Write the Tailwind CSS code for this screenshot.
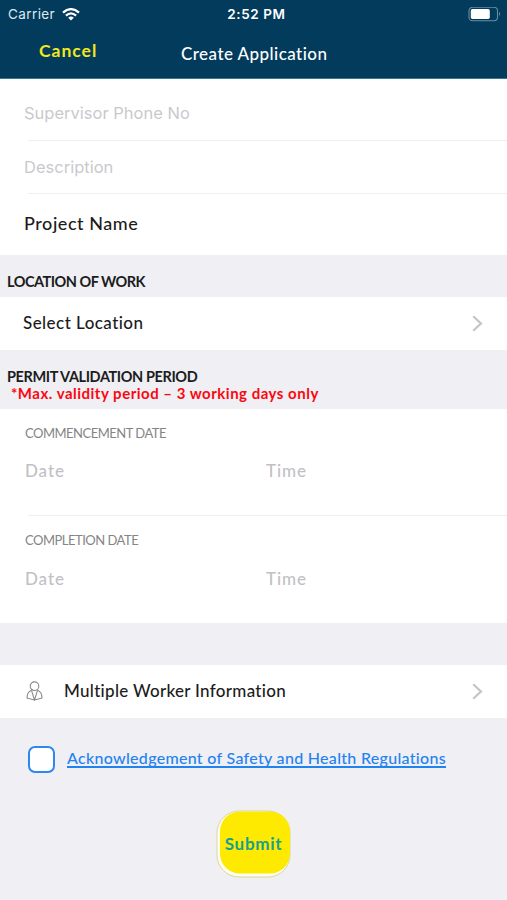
<!DOCTYPE html>
<html lang="en">
<head>
<meta charset="utf-8">
<title>Create Application</title>
<script src="https://cdn.jsdelivr.net/npm/@tailwindcss/browser@4"></script>
</head>
<body class="w-[507px] h-[900px] overflow-hidden bg-[#efeff4] font-[Lato,sans-serif] text-[#1c1c1c] whitespace-nowrap flex flex-col">
<header class="h-[79px] bg-[#023b5c] border-b border-[#3d7590] text-white shrink-0">
  <div class="h-7 pl-[8px] pr-[6px] grid grid-cols-3 items-center font-[Inter,sans-serif] text-[13.5px]">
    <div class="flex items-center gap-[7px] text-[#dfe8ee]"><span class="tracking-[0.4px]">Carrier</span>
      <svg class="w-[18px] h-[13px]" viewBox="0 0 18 13" fill="none" stroke="#fff" stroke-width="2.3"><path d="M1 4.600Q9-2.300 17 4.600M3.900 7.600Q9 3.200 14.100 7.600"/><path d="M9 12.400 6.200 9.700Q9 7.500 11.800 9.700Z" fill="#fff" stroke="none"/></svg>
    </div>
    <span class="text-center font-semibold tracking-[0.6px] pl-1">2:52 PM</span>
    <svg class="justify-self-end w-[33px] h-[15px]" viewBox="0 0 33 15" fill="none"><rect x="1" y=".3" width="28.5" height="13.4" rx="3.5" stroke="#6c8da1" stroke-width="1.1"/><rect x="2.8" y="2.1" width="19" height="9.8" rx="1.6" fill="#fff"/><path d="M31 4.800q2 2.200 0 4.400z" fill="#6c8da1"/></svg>
  </div>
  <div class="h-[51px] flex items-center">
    <span class="ml-[39px] w-[142px] -mt-[4px] text-[17.5px] font-bold text-[#f3e71d] tracking-[1px]">Cancel</span>
    <span class="text-[17px] font-medium tracking-[0.45px]">Create Application</span>
  </div>
</header>
<main class="flex flex-col">
  <section class="bg-white h-[176px]">
    <div class="h-[61px] pl-6 pt-2 flex items-center font-[Inter,sans-serif] text-[16.5px] text-[#c9c9cd]">Supervisor Phone No</div>
    <div class="ml-7 h-px bg-[#efeff1]"></div>
    <div class="h-[52px] pl-6 flex items-center font-[Inter,sans-serif] text-[16.5px] text-[#c9c9cd]">Description</div>
    <div class="ml-7 h-px bg-[#efeff1]"></div>
    <div class="h-[59px] pl-6 flex items-center text-[18px] font-medium tracking-[0.55px]">Project Name</div>
  </section>
  <h2 class="h-[42px] pl-[7px] pt-[18px] text-[14.5px] leading-[18px] font-bold tracking-[-0.5px]">LOCATION OF WORK</h2>
  <section class="bg-white h-[53px] pl-[23px] pr-6 flex items-center justify-between text-[17px] font-medium tracking-[0.45px]">
    <span class="-mt-[2px]">Select Location</span>
    <svg class="w-[11px] h-[17px] -mt-px" viewBox="0 0 11 17" fill="none" stroke="#c5c5c9" stroke-width="2.2"><path d="M1.200 1.200 9 8.500 1.200 15.800"/></svg>
  </section>
  <div class="h-[59px] pl-[7px] pt-[18px]">
    <h2 class="text-[14.5px] leading-[17px] font-bold tracking-[-0.4px]">PERMIT VALIDATION PERIOD</h2>
    <p class="pl-[4px] text-[15px] leading-[17px] font-bold text-[#fb0710] tracking-[0.5px]">*Max. validity period – 3 working days only</p>
  </div>
  <section class="bg-white h-[214px]">
    <div class="h-[106px] pl-[25px] pt-[14px]">
      <h3 class="text-[13px] leading-5 text-[#858585] tracking-[-0.5px]">COMMENCEMENT DATE</h3>
      <div class="grid grid-cols-2 pt-4 text-[17px] leading-6 text-[#c1c1c5] font-medium tracking-[0.9px]"><span>Date</span><span>Time</span></div>
    </div>
    <div class="ml-7 h-px bg-[#efeff1]"></div>
    <div class="h-[107px] pl-[25px] pt-[14px]">
      <h3 class="text-[13px] leading-5 text-[#858585] tracking-[-0.5px]">COMPLETION DATE</h3>
      <div class="grid grid-cols-2 pt-[17px] text-[17px] leading-6 text-[#c1c1c5] font-medium tracking-[0.9px]"><span>Date</span><span>Time</span></div>
    </div>
  </section>
  <section class="mt-[42px] bg-white h-[53px] pl-[26px] pr-6 flex items-center">
    <svg class="w-[17px] h-[20px] mr-[21px] -mt-px" viewBox="0 0 17 20" fill="none" stroke="#8b8b8b" stroke-width="1.1"><circle cx="8.5" cy="5.2" r="4.3"/><path d="M5.500 9.300C2.500 10.400 1 13.200 1 17Q4.500 18 8.500 19 12.500 18 16 17C16 13.200 14.500 10.400 11.500 9.300M5.500 9.300 8.500 19 11.500 9.300"/></svg>
    <span class="text-[17px] font-medium tracking-[0.3px] flex-1 -mt-[2px]">Multiple Worker Information</span>
    <svg class="w-[11px] h-[17px] -mt-px" viewBox="0 0 11 17" fill="none" stroke="#c5c5c9" stroke-width="2.2"><path d="M1.200 1.200 9 8.500 1.200 15.800"/></svg>
  </section>
  <div class="mt-[27px] ml-7 h-7 flex items-center gap-3">
    <span class="w-[27px] h-[27px] rounded-[7px] border-2 border-[#2c86f3] bg-white"></span>
    <a class="-mt-[2px] text-[16px] font-medium text-[#1f83f0] tracking-[0.3px] underline underline-offset-2 decoration-[1.5px] [text-decoration-skip-ink:none]">Acknowledgement of Safety and Health Regulations</a>
  </div>
  <button class="relative self-center mt-[37px] w-[75px] h-[68px]">
    <svg class="absolute inset-0 w-[75px] h-[68px]" viewBox="0 0 75 68"><rect x="1" y="1" width="73" height="66" rx="22" fill="#fffef0" stroke="#ddd59b"/><rect x="4" y="1.500" width="70" height="62" rx="20" fill="#fee900"/></svg>
    <span class="relative text-[17px] font-bold text-[#16a090] tracking-[0.7px]">Submit</span>
  </button>
</main>
</body>
</html>
